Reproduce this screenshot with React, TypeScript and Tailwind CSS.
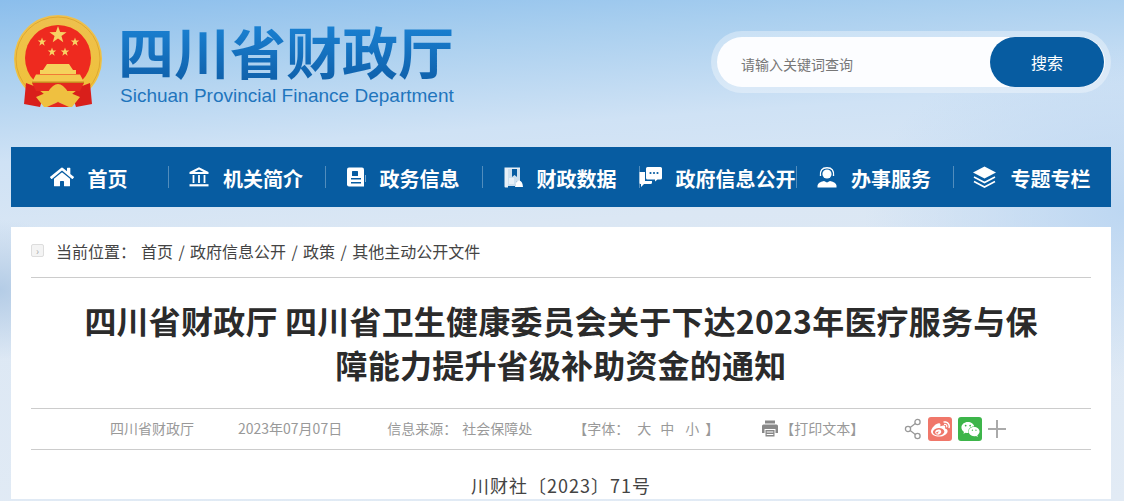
import { FaWeibo, FaWeixin, FaHome } from "react-icons/fa";
import type { ReactNode } from "react";

const cjk = "font-['Noto_Sans_CJK_SC','Liberation_Sans',sans-serif]";

function Star({ x, y, r }: { x: number; y: number; r: number }) {
  const pts = Array.from({ length: 10 }, (_, i) => {
    const a = -Math.PI / 2 + (i * Math.PI) / 5;
    const d = i % 2 === 0 ? r : r * 0.4;
    return `${x + d * Math.cos(a)},${y + d * Math.sin(a)}`;
  }).join(" ");
  return <polygon points={pts} fill="#f7d264" />;
}

// drawn in page coordinates, hence the viewBox offset
function Emblem() {
  return (
    <svg width="90" height="96" viewBox="13 14 90 96" className="shrink-0">
      <defs>
        <linearGradient id="gold" x1="0" y1="0" x2="0" y2="1">
          <stop offset="0" stopColor="#eec04e" />
          <stop offset="1" stopColor="#f0c238" />
        </linearGradient>
      </defs>
      <circle cx="58" cy="59" r="44" fill="url(#gold)" />
      <circle cx="58" cy="59" r="42" fill="none" stroke="#d9a22c" strokeWidth="0.8" />
      <circle cx="58" cy="58" r="33" fill="#ee2a1f" />
      <path d="M26 83 L24 104 L40 107 L44 94 L34 86 Z" fill="#d91f1b" />
      <path d="M90 83 L92 104 L76 107 L72 94 L82 86 Z" fill="#d91f1b" />
      <Star x={58} y={35} r={9} />
      <Star x={42} y={42} r={4.5} />
      <Star x={75} y={42} r={4.5} />
      <Star x={52} y={52} r={4.5} />
      <Star x={65} y={52} r={4.5} />
      <path d="M47 64 H69 L73 70 H76 V74 H40 V70 H43 Z" fill="#f5d25c" />
      <path d="M36 74.5 H80 L84 82 H32 Z" fill="#f3c94f" />
      <rect x="32" y="81.5" width="52" height="1.5" fill="#c9891f" />
      <path d="M32 83 H84 L80 91 H36 Z" fill="#e4291e" />
      <path d="M48 92 Q53 84 58 84 Q63 84 68 92 L80 97 L72 107 H66 L58 101 L50 107 H44 L36 97 Z" fill="#efc040" />
      <path d="M47 107 L58 102 L69 107 Z" fill="#e4291e" />
    </svg>
  );
}

function BankIcon() {
  return (
    <svg width="20" height="20" viewBox="0 0 20 20" fill="#fff">
      <path d="M10 0.3 L19.5 5 V7 H0.5 V5 Z M10 2.6 L5.5 5 H14.5 Z" fillRule="evenodd" />
      <rect x="3.6" y="8" width="1.8" height="8" />
      <rect x="9.1" y="8" width="1.8" height="8" />
      <rect x="14.6" y="8" width="1.8" height="8" />
      <rect x="0.5" y="17.2" width="19" height="2.2" />
    </svg>
  );
}

function BookIcon() {
  return (
    <svg width="19" height="20" viewBox="0 0 19 20">
      <path d="M2 0.5 H15 Q17 0.5 17 2.5 V19.5 H2 Q0 19.5 0 17.5 V2.5 Q0 0.5 2 0.5 Z" fill="#fff" />
      <rect x="5" y="4" width="6" height="5" rx="0.5" fill="#075ca1" />
      <rect x="4" y="11" width="10" height="1.5" fill="#075ca1" />
      <rect x="4" y="15" width="10" height="1.5" fill="#075ca1" />
      <rect x="18.2" y="8" width="0.8" height="7" fill="#9fc1dd" />
    </svg>
  );
}

function DataIcon() {
  return (
    <svg width="19" height="21" viewBox="0 0 19 21">
      <path d="M0.5 0.5 H16 V2 H4 V20.5 H1.5 Q0.5 20.5 0.5 19.5 Z" fill="#e8f0f7" />
      <path d="M4 2 H16 V14 H13 L11 19 H4 Z" fill="#cfe0ee" />
      <path d="M8 2 H13 V10 L10.5 8 L8 10 Z" fill="#075ca1" />
      <path d="M5 11 H10 V17 H5 Z" fill="#e8f0f7" />
      <path d="M11 20 Q11.5 13.5 15 13.5 Q18.5 13.5 19 20 Z" fill="#fff" />
    </svg>
  );
}

function ChatIcon() {
  return (
    <svg width="23" height="22" viewBox="0 0 23 22" fill="#fff">
      <path d="M8.5 1 H21.5 Q23 1 23 2.5 V12 Q23 13.5 21.5 13.5 H18.5 L16 15.5 V13.5 H8.5 Q7 13.5 7 12 V2.5 Q7 1 8.5 1 Z" />
      <path d="M0.5 6 H6 V15 H13 V16.5 Q13 18 11.5 18 H5 L2 21 V18 H1.5 Q0.5 18 0.5 17 Z" />
      <circle cx="11.5" cy="7" r="1.1" fill="#075ca1" />
      <circle cx="15" cy="7" r="1.1" fill="#075ca1" />
      <circle cx="18.5" cy="7" r="1.1" fill="#075ca1" />
    </svg>
  );
}

function AgentIcon() {
  return (
    <svg width="20" height="21" viewBox="0 0 20 21" fill="#fff">
      <circle cx="10" cy="7" r="4.6" />
      <path d="M3.5 9 Q2.5 0.8 10 0.8 Q17.5 0.8 16.5 9" fill="none" stroke="#fff" strokeWidth="1.4" />
      <path d="M0.5 20.5 V18.5 Q1 15 7 14 L10 15.5 L13 14 Q19 15 19.5 18.5 V20.5 Z" />
    </svg>
  );
}

function LayersIcon() {
  return (
    <svg width="25" height="23" viewBox="0 0 25 23">
      <path d="M12.5 0.5 L24 6.5 L12.5 12.5 L1 6.5 Z" fill="#fff" />
      <path d="M2 11 L12.5 16.5 L23 11" fill="none" stroke="#fff" strokeWidth="1.6" />
      <path d="M2 15.5 L12.5 21 L23 15.5" fill="none" stroke="#fff" strokeWidth="1.6" />
    </svg>
  );
}

type NavItem = { icon: ReactNode; label: string };

const navItems: NavItem[] = [
  { icon: <FaHome size={24} color="#fff" />, label: "首页" },
  { icon: <BankIcon />, label: "机关简介" },
  { icon: <BookIcon />, label: "政务信息" },
  { icon: <DataIcon />, label: "财政数据" },
  { icon: <ChatIcon />, label: "政府信息公开" },
  { icon: <AgentIcon />, label: "办事服务" },
  { icon: <LayersIcon />, label: "专题专栏" },
];

export default function App() {
  return (
    <div className={`h-screen overflow-hidden bg-[radial-gradient(260px_170px_at_100%_210px,#bdd7f2,transparent),radial-gradient(90px_70px_at_0_290px,#b4cce6,transparent),linear-gradient(176deg,#8bbeec_0%,#a9cfef_12%,#cfe2f5_28%,#dbe7f4_45%,#e2ebf5_100%)] ${cjk}`}>
      <header className="flex h-[147px] w-[1111px] items-start pl-[13px]">
        <div className="mt-[14px]">
          <Emblem />
        </div>
        <div className="ml-[15px] mt-[16px]">
          <div className="bg-[linear-gradient(180deg,#1c86d8,#0f5fa9)] bg-clip-text text-[56px] font-bold leading-[68px] text-transparent">
            四川省财政厅
          </div>
          <div className="ml-[2px] mt-[1px] whitespace-nowrap font-['Liberation_Sans',sans-serif] text-[19px] leading-[22px] text-[#1f75bd]">
            Sichuan Provincial Finance Department
          </div>
        </div>
        <div className="ml-auto mt-[31px] flex h-[62px] w-[400px] rounded-full bg-white/35 p-[6px]">
          <div className="flex w-full items-center rounded-full bg-[#fcfdff]">
            <span className="ml-[24px] mt-[4px] text-[14px] text-[#777]">请输入关键词查询</span>
            <button className="ml-auto mr-[1px] h-full w-[114px] rounded-full bg-[#075ca1] text-[16px] text-white">
              搜索
            </button>
          </div>
        </div>
      </header>

      <nav className="ml-[11px] flex h-[60px] w-[1100px] items-center bg-[#075ca1]">
        {navItems.map((item, i) => (
          <div
            key={item.label}
            className={`flex h-[22px] w-[157px] items-center justify-center gap-[14px] border-white/30 pr-[2px] ${i > 0 ? "border-l" : ""}`}
          >
            <span className="flex shrink-0 items-center">{item.icon}</span>
            <span className="mt-[3px] whitespace-nowrap text-[20px] font-bold text-white">{item.label}</span>
          </div>
        ))}
      </nav>

      <main className="ml-[11px] mt-[20px] w-[1100px] bg-white px-[20px]">
        <div className="flex h-[51px] items-center border-b border-[#ccc] pb-[3px] text-[16px] text-[#444]">
          <span className="flex h-[13px] w-[13px] items-center justify-center rounded-[2px] border border-[#ddd] bg-[#f4f4f4] text-[10px] leading-none text-[#aaa]">
            ›
          </span>
          <span className="ml-[12px]">当前位置：</span>
          <span className="ml-[5px] whitespace-pre [word-spacing:1.8px]">首页 / 政府信息公开 / 政策 / 其他主动公开文件</span>
        </div>

        <h1 className="border-b border-[#ccc] px-[45px] pb-[22px] pt-[20px] text-center text-[32px] font-bold leading-[44px] tracking-[0.2px] text-[#2b2b2b]">
          四川省财政厅 四川省卫生健康委员会关于下达2023年医疗服务与保障能力提升省级补助资金的通知
        </h1>

        <div className="flex h-[41px] items-center border-b border-[#ccc] pl-[79px] text-[14px] text-[#999]">
          <span className="mb-[2px]">四川省财政厅</span>
          <span className="mb-[2px] ml-[44px]">2023年07月07日</span>
          <span className="mb-[2px] ml-[45px]">信息来源：</span>
          <span className="mb-[2px] ml-[5px]">社会保障处</span>
          <span className="mb-[2px] ml-[41px]">【字体：</span>
          <span className="mb-[2px] ml-[8px]">大</span>
          <span className="mb-[2px] ml-[9px]">中</span>
          <span className="mb-[2px] ml-[11px]">小</span>
          <span className="mb-[2px] ml-[6px]">】</span>
          <svg width="16" height="17" viewBox="0 0 16 17" fill="#888" className="mb-[1px] ml-[43px]">
            <rect x="3" y="0.5" width="10" height="3" />
            <path d="M1.5 4.5 H14.5 Q16 4.5 16 6 V13 H13.5 V9 H2.5 V13 H0 V6 Q0 4.5 1.5 4.5 Z" />
            <path d="M3.5 10 H12.5 V16.5 H3.5 Z M4.7 11.5 V12.5 H11.3 V11.5 Z M4.7 14 V15 H11.3 V14 Z" fillRule="evenodd" />
          </svg>
          <span className="mb-[2px] ml-[2px]">【打印文本】</span>
          <svg width="18" height="24" viewBox="0 0 18 24" fill="none" stroke="#999" strokeWidth="1.3" className="ml-[40px]">
            <circle cx="13.5" cy="5" r="2.6" />
            <circle cx="4" cy="12" r="2.6" />
            <circle cx="13.5" cy="19" r="2.6" />
            <path d="M6.2 10.4 L11.3 6.6 M6.2 13.6 L11.3 17.4" />
          </svg>
          <span className="ml-[6px] flex h-[24px] w-[24px] items-center justify-center rounded-[3px] bg-[#f0776a]">
            <FaWeibo size={19} color="#fff" />
          </span>
          <span className="ml-[6px] flex h-[24px] w-[24px] items-center justify-center rounded-[3px] bg-[#3db54a]">
            <FaWeixin size={19} color="#fff" />
          </span>
          <svg width="18" height="18" viewBox="0 0 18 18" fill="#aaa" className="ml-[6px]">
            <rect x="0" y="8" width="18" height="2" />
            <rect x="8" y="0" width="2" height="18" />
          </svg>
        </div>

        <p className="pt-[21px] text-center text-[18px] leading-[28px] tracking-[1px] text-[#444]">川财社〔2023〕71号</p>
      </main>
    </div>
  );
}
